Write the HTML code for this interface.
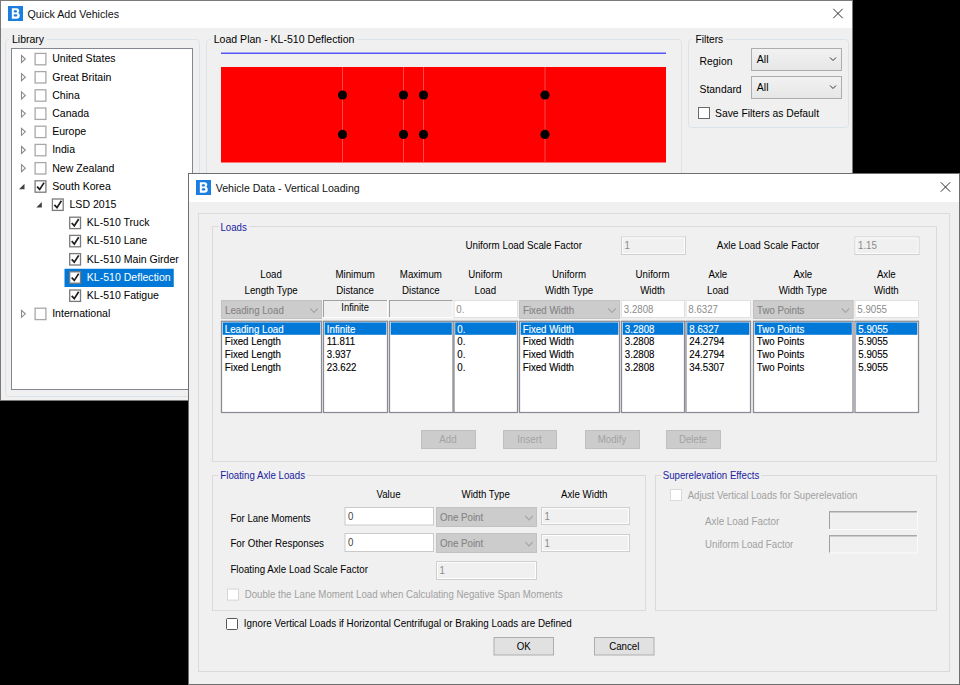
<!DOCTYPE html>
<html><head><meta charset="utf-8"><title>Quick Add Vehicles</title>
<style>
html,body{margin:0;padding:0;background:#000;width:960px;height:685px;overflow:hidden}
svg{display:block;font-family:"Liberation Sans",sans-serif}
</style></head><body>
<svg width="960" height="685" viewBox="0 0 960 685">
<defs><linearGradient id="cg" x1="0" y1="0" x2="0" y2="1"><stop offset="0" stop-color="#f2f2f2"/><stop offset="1" stop-color="#e6e6e6"/></linearGradient></defs>
<rect x="0" y="0" width="960" height="685" fill="#000"/>
<rect x="0.5" y="0.5" width="852" height="400" fill="#f0f0f0" stroke="#7a7a7a" stroke-width="1"/>
<rect x="1" y="1" width="851" height="27" fill="#fff"/>
<rect x="8" y="6" width="15" height="15" fill="#1a7de0"/>
<path d="M11.85 8.25 h4.7 q2.7 0 2.7 2.55 q0 1.5 -1.1 2.05 q1.6 0.6 1.6 2.6 q0 3.25 -3.25 3.25 h-4.65 z" fill="#fff"/>
<rect x="13.65" y="10.35" width="3.35" height="2.2" rx="1.1" fill="#1a7de0"/>
<rect x="13.65" y="14.35" width="3.7" height="2.1" rx="1.05" fill="#1a7de0"/>
<text x="27.50" y="18.20" font-size="11.3" fill="#111" textLength="91.50" lengthAdjust="spacingAndGlyphs">Quick Add Vehicles</text>
<path d="M833.3 8.8 L842.7 18.2 M842.7 8.8 L833.3 18.2" stroke="#2a2a2a" stroke-width="1.0" fill="none"/>
<rect x="5.5" y="39.5" width="194" height="357" fill="none" stroke="#dce3e8" stroke-width="1" rx="3"/>
<rect x="9" y="37" width="38" height="5" fill="#f0f0f0"/>
<text x="12.00" y="43.00" font-size="11.5" fill="#000" textLength="32.00" lengthAdjust="spacingAndGlyphs">Library</text>
<rect x="11.5" y="48.5" width="181" height="341" fill="#fff" stroke="#828790" stroke-width="1"/>
<path d="M21.5 55.5 L25.3 59.0 L21.5 62.5 Z" fill="none" stroke="#8a8a8a" stroke-width="1.1"/>
<rect x="35.1" y="53.4" width="10.8" height="11.4" fill="#fff" stroke="#a8a8a8" stroke-width="1.3"/>
<text x="52.20" y="62.30" font-size="11.5" fill="#000" textLength="63.34" lengthAdjust="spacingAndGlyphs">United States</text>
<path d="M21.5 73.7 L25.3 77.2 L21.5 80.7 Z" fill="none" stroke="#8a8a8a" stroke-width="1.1"/>
<rect x="35.1" y="71.6" width="10.8" height="11.4" fill="#fff" stroke="#a8a8a8" stroke-width="1.3"/>
<text x="52.20" y="80.50" font-size="11.5" fill="#000" textLength="59.22" lengthAdjust="spacingAndGlyphs">Great Britain</text>
<path d="M21.5 91.89999999999999 L25.3 95.39999999999999 L21.5 98.89999999999999 Z" fill="none" stroke="#8a8a8a" stroke-width="1.1"/>
<rect x="35.1" y="89.79999999999998" width="10.8" height="11.4" fill="#fff" stroke="#a8a8a8" stroke-width="1.3"/>
<text x="52.20" y="98.70" font-size="11.5" fill="#000" textLength="27.57" lengthAdjust="spacingAndGlyphs">China</text>
<path d="M21.5 110.1 L25.3 113.6 L21.5 117.1 Z" fill="none" stroke="#8a8a8a" stroke-width="1.1"/>
<rect x="35.1" y="107.99999999999999" width="10.8" height="11.4" fill="#fff" stroke="#a8a8a8" stroke-width="1.3"/>
<text x="52.20" y="116.90" font-size="11.5" fill="#000" textLength="36.96" lengthAdjust="spacingAndGlyphs">Canada</text>
<path d="M21.5 128.29999999999998 L25.3 131.79999999999998 L21.5 135.29999999999998 Z" fill="none" stroke="#8a8a8a" stroke-width="1.1"/>
<rect x="35.1" y="126.19999999999999" width="10.8" height="11.4" fill="#fff" stroke="#a8a8a8" stroke-width="1.3"/>
<text x="52.20" y="135.10" font-size="11.5" fill="#000" textLength="34.02" lengthAdjust="spacingAndGlyphs">Europe</text>
<path d="M21.5 146.5 L25.3 150.0 L21.5 153.5 Z" fill="none" stroke="#8a8a8a" stroke-width="1.1"/>
<rect x="35.1" y="144.4" width="10.8" height="11.4" fill="#fff" stroke="#a8a8a8" stroke-width="1.3"/>
<text x="52.20" y="153.30" font-size="11.5" fill="#000" textLength="22.88" lengthAdjust="spacingAndGlyphs">India</text>
<path d="M21.5 164.7 L25.3 168.2 L21.5 171.7 Z" fill="none" stroke="#8a8a8a" stroke-width="1.1"/>
<rect x="35.1" y="162.6" width="10.8" height="11.4" fill="#fff" stroke="#a8a8a8" stroke-width="1.3"/>
<text x="52.20" y="171.50" font-size="11.5" fill="#000" textLength="62.16" lengthAdjust="spacingAndGlyphs">New Zealand</text>
<path d="M19.0 189.2 L24.5 189.2 L24.5 183.7 Z" fill="#404040"/>
<rect x="35.1" y="180.79999999999998" width="10.8" height="11.4" fill="#fff" stroke="#7a7a7a" stroke-width="1.3"/>
<path d="M37.1 186.6 L39.7 189.39999999999998 L44.1 182.6" fill="none" stroke="#1e1e1e" stroke-width="1.7"/>
<text x="52.20" y="189.70" font-size="11.5" fill="#000" textLength="58.65" lengthAdjust="spacingAndGlyphs">South Korea</text>
<path d="M36.3 207.39999999999998 L41.8 207.39999999999998 L41.8 201.89999999999998 Z" fill="#404040"/>
<rect x="52.400000000000006" y="198.99999999999997" width="10.8" height="11.4" fill="#fff" stroke="#7a7a7a" stroke-width="1.3"/>
<path d="M54.400000000000006 204.79999999999998 L57.00000000000001 207.59999999999997 L61.400000000000006 200.79999999999998" fill="none" stroke="#1e1e1e" stroke-width="1.7"/>
<text x="69.50" y="207.90" font-size="11.5" fill="#000" textLength="46.92" lengthAdjust="spacingAndGlyphs">LSD 2015</text>
<rect x="69.7" y="217.19999999999996" width="10.8" height="11.4" fill="#fff" stroke="#7a7a7a" stroke-width="1.3"/>
<path d="M71.7 222.99999999999997 L74.3 225.79999999999995 L78.7 218.99999999999997" fill="none" stroke="#1e1e1e" stroke-width="1.7"/>
<text x="86.80" y="226.10" font-size="11.5" fill="#000" textLength="62.74" lengthAdjust="spacingAndGlyphs">KL-510 Truck</text>
<rect x="69.7" y="235.4" width="10.8" height="11.4" fill="#fff" stroke="#7a7a7a" stroke-width="1.3"/>
<path d="M71.7 241.20000000000002 L74.3 244.0 L78.7 237.20000000000002" fill="none" stroke="#1e1e1e" stroke-width="1.7"/>
<text x="86.80" y="244.30" font-size="11.5" fill="#000" textLength="60.42" lengthAdjust="spacingAndGlyphs">KL-510 Lane</text>
<rect x="69.7" y="253.6" width="10.8" height="11.4" fill="#fff" stroke="#7a7a7a" stroke-width="1.3"/>
<path d="M71.7 259.4 L74.3 262.2 L78.7 255.4" fill="none" stroke="#1e1e1e" stroke-width="1.7"/>
<text x="86.80" y="262.50" font-size="11.5" fill="#000" textLength="92.06" lengthAdjust="spacingAndGlyphs">KL-510 Main Girder</text>
<rect x="64.5" y="268.75" width="109.25" height="18.25" fill="#0078d7"/>
<rect x="69.7" y="271.8" width="10.8" height="11.4" fill="#fff" stroke="#7a7a7a" stroke-width="1.3"/>
<path d="M71.7 277.6 L74.3 280.40000000000003 L78.7 273.6" fill="none" stroke="#1e1e1e" stroke-width="1.7"/>
<text x="86.80" y="280.70" font-size="11.5" fill="#fff" textLength="83.86" lengthAdjust="spacingAndGlyphs">KL-510 Deflection</text>
<rect x="69.7" y="290.0" width="10.8" height="11.4" fill="#fff" stroke="#7a7a7a" stroke-width="1.3"/>
<path d="M71.7 295.8 L74.3 298.6 L78.7 291.8" fill="none" stroke="#1e1e1e" stroke-width="1.7"/>
<text x="86.80" y="298.90" font-size="11.5" fill="#000" textLength="72.14" lengthAdjust="spacingAndGlyphs">KL-510 Fatigue</text>
<path d="M21.5 310.29999999999995 L25.3 313.79999999999995 L21.5 317.29999999999995 Z" fill="none" stroke="#8a8a8a" stroke-width="1.1"/>
<rect x="35.1" y="308.2" width="10.8" height="11.4" fill="#fff" stroke="#a8a8a8" stroke-width="1.3"/>
<text x="52.20" y="317.10" font-size="11.5" fill="#000" textLength="58.07" lengthAdjust="spacingAndGlyphs">International</text>
<rect x="206.5" y="39.5" width="475" height="357" fill="none" stroke="#dce3e8" stroke-width="1" rx="3"/>
<rect x="210.7" y="37" width="146.75678125000002" height="5" fill="#f0f0f0"/>
<text x="213.70" y="43.00" font-size="11.5" fill="#000" textLength="140.76" lengthAdjust="spacingAndGlyphs">Load Plan - KL-510 Deflection</text>
<rect x="221" y="52.5" width="445" height="1.5" fill="#5555f8"/>
<rect x="221" y="67" width="445" height="95.5" fill="#ff0000"/>
<rect x="342.0" y="67" width="1" height="95.5" fill="#ff4a4a"/>
<circle cx="342.5" cy="95" r="4.6" fill="#000"/>
<circle cx="342.5" cy="134.4" r="4.6" fill="#000"/>
<rect x="403.0" y="67" width="1" height="95.5" fill="#ff4a4a"/>
<circle cx="403.5" cy="95" r="4.6" fill="#000"/>
<circle cx="403.5" cy="134.4" r="4.6" fill="#000"/>
<rect x="423.0" y="67" width="1" height="95.5" fill="#ff4a4a"/>
<circle cx="423.5" cy="95" r="4.6" fill="#000"/>
<circle cx="423.5" cy="134.4" r="4.6" fill="#000"/>
<rect x="544.5" y="67" width="1" height="95.5" fill="#ff4a4a"/>
<circle cx="545" cy="95" r="4.6" fill="#000"/>
<circle cx="545" cy="134.4" r="4.6" fill="#000"/>
<rect x="688.5" y="39.5" width="160" height="88" fill="none" stroke="#dce3e8" stroke-width="1" rx="3"/>
<rect x="692.5" y="37" width="33.7" height="5" fill="#f0f0f0"/>
<text x="695.50" y="42.70" font-size="11.5" fill="#000" textLength="27.70" lengthAdjust="spacingAndGlyphs">Filters</text>
<text x="699.60" y="64.60" font-size="11.5" fill="#000" textLength="32.80" lengthAdjust="spacingAndGlyphs">Region</text>
<text x="699.60" y="92.80" font-size="11.5" fill="#000" textLength="42.00" lengthAdjust="spacingAndGlyphs">Standard</text>
<rect x="751.5" y="48.5" width="90" height="22" fill="url(#cg)" stroke="#adadad"/>
<text x="756.80" y="63.00" font-size="11.5" fill="#000" textLength="11.72" lengthAdjust="spacingAndGlyphs">All</text>
<path d="M830 57.5 L833 60.5 L836 57.5" fill="none" stroke="#333" stroke-width="1"/>
<rect x="751.5" y="76.5" width="90" height="22" fill="url(#cg)" stroke="#adadad"/>
<text x="756.80" y="91.00" font-size="11.5" fill="#000" textLength="11.72" lengthAdjust="spacingAndGlyphs">All</text>
<path d="M830 85.5 L833 88.5 L836 85.5" fill="none" stroke="#333" stroke-width="1"/>
<rect x="698.5" y="107.5" width="11" height="11" fill="#fff" stroke="#6a6a6a" stroke-width="1"/>
<text x="715.00" y="117.20" font-size="11.5" fill="#000" textLength="104.00" lengthAdjust="spacingAndGlyphs">Save Filters as Default</text>
<rect x="188.5" y="173.5" width="771" height="511" fill="#f0f0f0" stroke="#6e6e6e" stroke-width="1"/>
<rect x="189" y="174" width="770" height="28" fill="#fff"/>
<rect x="196" y="180" width="15" height="15" fill="#1a7de0"/>
<path d="M199.85 182.25 h4.7 q2.7 0 2.7 2.55 q0 1.5 -1.1 2.05 q1.6 0.6 1.6 2.6 q0 3.25 -3.25 3.25 h-4.65 z" fill="#fff"/>
<rect x="201.65" y="184.35" width="3.35" height="2.2" rx="1.1" fill="#1a7de0"/>
<rect x="201.65" y="188.35" width="3.7" height="2.1" rx="1.05" fill="#1a7de0"/>
<text x="215.70" y="191.90" font-size="11.3" fill="#111" textLength="144.00" lengthAdjust="spacingAndGlyphs">Vehicle Data - Vertical Loading</text>
<path d="M940.8 182.3 L950.2 191.7 M950.2 182.3 L940.8 191.7" stroke="#2a2a2a" stroke-width="1.0" fill="none"/>
<rect x="198.5" y="213.5" width="751" height="458" fill="none" stroke="#dadada" stroke-width="1"/>
<rect x="212.5" y="226.5" width="724" height="235" fill="none" stroke="#dadada" stroke-width="1"/>
<rect x="218.5" y="223" width="30.3" height="6" fill="#f0f0f0"/>
<text x="220.50" y="231.00" font-size="10.5" fill="#20209e" textLength="26.30" lengthAdjust="spacingAndGlyphs">Loads</text>
<text x="465.40" y="249.00" font-size="10.5" fill="#000" textLength="116.60" lengthAdjust="spacingAndGlyphs">Uniform Load Scale Factor</text>
<rect x="621.5" y="237.0" width="64" height="17.5" fill="#f0f0f0" stroke="#cfcfcf" stroke-width="1"/>
<rect x="622.5" y="238.0" width="62" height="15.5" fill="none" stroke="#fdfdfd" stroke-width="1"/>
<text x="624.50" y="249.25" font-size="10.5" fill="#8a8a8a" textLength="5.39" lengthAdjust="spacingAndGlyphs">1</text>
<text x="716.80" y="249.00" font-size="10.5" fill="#000" textLength="102.40" lengthAdjust="spacingAndGlyphs">Axle Load Scale Factor</text>
<rect x="855.0" y="237.0" width="64.0" height="17.5" fill="#f0f0f0" stroke="#cfcfcf" stroke-width="1"/>
<rect x="856.0" y="238.0" width="62.0" height="15.5" fill="none" stroke="#fdfdfd" stroke-width="1"/>
<text x="858.00" y="249.25" font-size="10.5" fill="#8a8a8a" textLength="18.88" lengthAdjust="spacingAndGlyphs">1.15</text>
<text x="271.10" y="278.00" font-size="10.5" fill="#000" textLength="21.58" lengthAdjust="spacingAndGlyphs" text-anchor="middle">Load</text>
<text x="271.10" y="293.50" font-size="10.5" fill="#000" textLength="53.22" lengthAdjust="spacingAndGlyphs" text-anchor="middle">Length Type</text>
<rect x="221.0" y="300" width="101.0" height="19" fill="#cccccc"/>
<rect x="221.5" y="300.5" width="100.0" height="18" fill="none" stroke="#c2c2c2" stroke-width="1"/>
<text x="225.00" y="313.50" font-size="10.5" fill="#858585" textLength="58.80" lengthAdjust="spacingAndGlyphs" stroke="#858585" stroke-width="0.12">Leading Load</text>
<path d="M310.2 308.5 L314.0 312.5 L317.8 308.5" fill="none" stroke="#a6a6a6" stroke-width="1.1"/>
<rect x="221.5" y="321.3" width="100.0" height="91.2" fill="#fff" stroke="#888b93" stroke-width="1.25"/>
<rect x="222.7" y="322.4" width="97.6" height="12.4" fill="#0078d7"/>
<text x="224.80" y="332.50" font-size="10.5" fill="#fff" textLength="58.80" lengthAdjust="spacingAndGlyphs" stroke="#fff" stroke-width="0.12">Leading Load</text>
<text x="224.80" y="345.30" font-size="10.5" fill="#000" textLength="56.08" lengthAdjust="spacingAndGlyphs" stroke="#000" stroke-width="0.12">Fixed Length</text>
<text x="224.80" y="358.10" font-size="10.5" fill="#000" textLength="56.08" lengthAdjust="spacingAndGlyphs" stroke="#000" stroke-width="0.12">Fixed Length</text>
<text x="224.80" y="370.90" font-size="10.5" fill="#000" textLength="56.08" lengthAdjust="spacingAndGlyphs" stroke="#000" stroke-width="0.12">Fixed Length</text>
<text x="355.10" y="278.00" font-size="10.5" fill="#000" textLength="39.34" lengthAdjust="spacingAndGlyphs" text-anchor="middle">Minimum</text>
<text x="355.10" y="293.50" font-size="10.5" fill="#000" textLength="37.74" lengthAdjust="spacingAndGlyphs" text-anchor="middle">Distance</text>
<rect x="323.0" y="300" width="65.0" height="18" fill="#f0f0f0"/>
<line x1="323.5" y1="300" x2="323.5" y2="318" stroke="#a0a0a0" stroke-width="1"/>
<line x1="323.0" y1="300.5" x2="388.0" y2="300.5" stroke="#a0a0a0" stroke-width="1"/>
<line x1="387.5" y1="300" x2="387.5" y2="318" stroke="#fff" stroke-width="1"/>
<line x1="323.0" y1="317.5" x2="388.0" y2="317.5" stroke="#fff" stroke-width="1"/>
<text x="355.10" y="310.90" font-size="10.5" fill="#000" textLength="27.50" lengthAdjust="spacingAndGlyphs" text-anchor="middle">Infinite</text>
<rect x="323.5" y="321.3" width="64.0" height="91.2" fill="#fff" stroke="#888b93" stroke-width="1.25"/>
<rect x="324.7" y="322.4" width="61.6" height="12.4" fill="#0078d7"/>
<text x="326.80" y="332.50" font-size="10.5" fill="#fff" textLength="28.58" lengthAdjust="spacingAndGlyphs" stroke="#fff" stroke-width="0.12">Infinite</text>
<text x="326.80" y="345.30" font-size="10.5" fill="#000" textLength="28.23" lengthAdjust="spacingAndGlyphs" stroke="#000" stroke-width="0.12">11.811</text>
<text x="326.80" y="358.10" font-size="10.5" fill="#000" textLength="24.27" lengthAdjust="spacingAndGlyphs" stroke="#000" stroke-width="0.12">3.937</text>
<text x="326.80" y="370.90" font-size="10.5" fill="#000" textLength="29.67" lengthAdjust="spacingAndGlyphs" stroke="#000" stroke-width="0.12">23.622</text>
<text x="420.85" y="278.00" font-size="10.5" fill="#000" textLength="42.04" lengthAdjust="spacingAndGlyphs" text-anchor="middle">Maximum</text>
<text x="420.85" y="293.50" font-size="10.5" fill="#000" textLength="37.74" lengthAdjust="spacingAndGlyphs" text-anchor="middle">Distance</text>
<rect x="389.0" y="300" width="64.5" height="18" fill="#f0f0f0"/>
<line x1="389.5" y1="300" x2="389.5" y2="318" stroke="#a0a0a0" stroke-width="1"/>
<line x1="389.0" y1="300.5" x2="453.5" y2="300.5" stroke="#a0a0a0" stroke-width="1"/>
<line x1="453.0" y1="300" x2="453.0" y2="318" stroke="#fff" stroke-width="1"/>
<line x1="389.0" y1="317.5" x2="453.5" y2="317.5" stroke="#fff" stroke-width="1"/>
<rect x="389.5" y="321.3" width="63.5" height="91.2" fill="#fff" stroke="#888b93" stroke-width="1.25"/>
<rect x="390.7" y="322.4" width="61.1" height="12.4" fill="#0078d7"/>
<text x="485.35" y="278.00" font-size="10.5" fill="#000" textLength="33.96" lengthAdjust="spacingAndGlyphs" text-anchor="middle">Uniform</text>
<text x="485.35" y="293.50" font-size="10.5" fill="#000" textLength="21.58" lengthAdjust="spacingAndGlyphs" text-anchor="middle">Load</text>
<rect x="453.5" y="300" width="64.5" height="18" fill="#fff"/>
<rect x="454.0" y="300.5" width="63.5" height="17" fill="none" stroke="#e0e0e0" stroke-width="1"/>
<text x="456.30" y="312.50" font-size="10.5" fill="#8c8c8c" textLength="8.09" lengthAdjust="spacingAndGlyphs">0.</text>
<rect x="454.0" y="321.3" width="63.5" height="91.2" fill="#fff" stroke="#888b93" stroke-width="1.25"/>
<rect x="455.2" y="322.4" width="61.1" height="12.4" fill="#0078d7"/>
<text x="457.30" y="332.50" font-size="10.5" fill="#fff" textLength="8.09" lengthAdjust="spacingAndGlyphs" stroke="#fff" stroke-width="0.12">0.</text>
<text x="457.30" y="345.30" font-size="10.5" fill="#000" textLength="8.09" lengthAdjust="spacingAndGlyphs" stroke="#000" stroke-width="0.12">0.</text>
<text x="457.30" y="358.10" font-size="10.5" fill="#000" textLength="8.09" lengthAdjust="spacingAndGlyphs" stroke="#000" stroke-width="0.12">0.</text>
<text x="457.30" y="370.90" font-size="10.5" fill="#000" textLength="8.09" lengthAdjust="spacingAndGlyphs" stroke="#000" stroke-width="0.12">0.</text>
<text x="569.10" y="278.00" font-size="10.5" fill="#000" textLength="33.96" lengthAdjust="spacingAndGlyphs" text-anchor="middle">Uniform</text>
<text x="569.10" y="293.50" font-size="10.5" fill="#000" textLength="48.34" lengthAdjust="spacingAndGlyphs" text-anchor="middle">Width Type</text>
<rect x="519.0" y="300" width="101.0" height="19" fill="#cccccc"/>
<rect x="519.5" y="300.5" width="100.0" height="18" fill="none" stroke="#c2c2c2" stroke-width="1"/>
<text x="523.00" y="313.50" font-size="10.5" fill="#858585" textLength="51.21" lengthAdjust="spacingAndGlyphs" stroke="#858585" stroke-width="0.12">Fixed Width</text>
<path d="M608.2 308.5 L612.0 312.5 L615.8 308.5" fill="none" stroke="#a6a6a6" stroke-width="1.1"/>
<rect x="519.5" y="321.3" width="100.0" height="91.2" fill="#fff" stroke="#888b93" stroke-width="1.25"/>
<rect x="520.7" y="322.4" width="97.6" height="12.4" fill="#0078d7"/>
<text x="522.80" y="332.50" font-size="10.5" fill="#fff" textLength="51.21" lengthAdjust="spacingAndGlyphs" stroke="#fff" stroke-width="0.12">Fixed Width</text>
<text x="522.80" y="345.30" font-size="10.5" fill="#000" textLength="51.21" lengthAdjust="spacingAndGlyphs" stroke="#000" stroke-width="0.12">Fixed Width</text>
<text x="522.80" y="358.10" font-size="10.5" fill="#000" textLength="51.21" lengthAdjust="spacingAndGlyphs" stroke="#000" stroke-width="0.12">Fixed Width</text>
<text x="522.80" y="370.90" font-size="10.5" fill="#000" textLength="51.21" lengthAdjust="spacingAndGlyphs" stroke="#000" stroke-width="0.12">Fixed Width</text>
<text x="652.60" y="278.00" font-size="10.5" fill="#000" textLength="33.96" lengthAdjust="spacingAndGlyphs" text-anchor="middle">Uniform</text>
<text x="652.60" y="293.50" font-size="10.5" fill="#000" textLength="24.79" lengthAdjust="spacingAndGlyphs" text-anchor="middle">Width</text>
<rect x="621.0" y="300" width="64.0" height="18" fill="#fff"/>
<rect x="621.5" y="300.5" width="63.0" height="17" fill="none" stroke="#e0e0e0" stroke-width="1"/>
<text x="623.80" y="312.50" font-size="10.5" fill="#8c8c8c" textLength="29.67" lengthAdjust="spacingAndGlyphs">3.2808</text>
<rect x="621.5" y="321.3" width="63.0" height="91.2" fill="#fff" stroke="#888b93" stroke-width="1.25"/>
<rect x="622.7" y="322.4" width="60.6" height="12.4" fill="#0078d7"/>
<text x="624.80" y="332.50" font-size="10.5" fill="#fff" textLength="29.67" lengthAdjust="spacingAndGlyphs" stroke="#fff" stroke-width="0.12">3.2808</text>
<text x="624.80" y="345.30" font-size="10.5" fill="#000" textLength="29.67" lengthAdjust="spacingAndGlyphs" stroke="#000" stroke-width="0.12">3.2808</text>
<text x="624.80" y="358.10" font-size="10.5" fill="#000" textLength="29.67" lengthAdjust="spacingAndGlyphs" stroke="#000" stroke-width="0.12">3.2808</text>
<text x="624.80" y="370.90" font-size="10.5" fill="#000" textLength="29.67" lengthAdjust="spacingAndGlyphs" stroke="#000" stroke-width="0.12">3.2808</text>
<text x="717.85" y="278.00" font-size="10.5" fill="#000" textLength="18.87" lengthAdjust="spacingAndGlyphs" text-anchor="middle">Axle</text>
<text x="717.85" y="293.50" font-size="10.5" fill="#000" textLength="21.58" lengthAdjust="spacingAndGlyphs" text-anchor="middle">Load</text>
<rect x="685.5" y="300" width="65.5" height="18" fill="#fff"/>
<rect x="686.0" y="300.5" width="64.5" height="17" fill="none" stroke="#e0e0e0" stroke-width="1"/>
<text x="688.30" y="312.50" font-size="10.5" fill="#8c8c8c" textLength="29.67" lengthAdjust="spacingAndGlyphs">8.6327</text>
<rect x="686.0" y="321.3" width="64.5" height="91.2" fill="#fff" stroke="#888b93" stroke-width="1.25"/>
<rect x="687.2" y="322.4" width="62.1" height="12.4" fill="#0078d7"/>
<text x="689.30" y="332.50" font-size="10.5" fill="#fff" textLength="29.67" lengthAdjust="spacingAndGlyphs" stroke="#fff" stroke-width="0.12">8.6327</text>
<text x="689.30" y="345.30" font-size="10.5" fill="#000" textLength="35.06" lengthAdjust="spacingAndGlyphs" stroke="#000" stroke-width="0.12">24.2794</text>
<text x="689.30" y="358.10" font-size="10.5" fill="#000" textLength="35.06" lengthAdjust="spacingAndGlyphs" stroke="#000" stroke-width="0.12">24.2794</text>
<text x="689.30" y="370.90" font-size="10.5" fill="#000" textLength="35.06" lengthAdjust="spacingAndGlyphs" stroke="#000" stroke-width="0.12">34.5307</text>
<text x="802.85" y="278.00" font-size="10.5" fill="#000" textLength="18.87" lengthAdjust="spacingAndGlyphs" text-anchor="middle">Axle</text>
<text x="802.85" y="293.50" font-size="10.5" fill="#000" textLength="48.34" lengthAdjust="spacingAndGlyphs" text-anchor="middle">Width Type</text>
<rect x="753.0" y="300" width="100.5" height="19" fill="#cccccc"/>
<rect x="753.5" y="300.5" width="99.5" height="18" fill="none" stroke="#c2c2c2" stroke-width="1"/>
<text x="757.00" y="313.50" font-size="10.5" fill="#858585" textLength="47.44" lengthAdjust="spacingAndGlyphs" stroke="#858585" stroke-width="0.12">Two Points</text>
<path d="M841.7 308.5 L845.5 312.5 L849.3 308.5" fill="none" stroke="#a6a6a6" stroke-width="1.1"/>
<rect x="753.5" y="321.3" width="99.5" height="91.2" fill="#fff" stroke="#888b93" stroke-width="1.25"/>
<rect x="754.7" y="322.4" width="97.1" height="12.4" fill="#0078d7"/>
<text x="756.80" y="332.50" font-size="10.5" fill="#fff" textLength="47.44" lengthAdjust="spacingAndGlyphs" stroke="#fff" stroke-width="0.12">Two Points</text>
<text x="756.80" y="345.30" font-size="10.5" fill="#000" textLength="47.44" lengthAdjust="spacingAndGlyphs" stroke="#000" stroke-width="0.12">Two Points</text>
<text x="756.80" y="358.10" font-size="10.5" fill="#000" textLength="47.44" lengthAdjust="spacingAndGlyphs" stroke="#000" stroke-width="0.12">Two Points</text>
<text x="756.80" y="370.90" font-size="10.5" fill="#000" textLength="47.44" lengthAdjust="spacingAndGlyphs" stroke="#000" stroke-width="0.12">Two Points</text>
<text x="886.35" y="278.00" font-size="10.5" fill="#000" textLength="18.87" lengthAdjust="spacingAndGlyphs" text-anchor="middle">Axle</text>
<text x="886.35" y="293.50" font-size="10.5" fill="#000" textLength="24.79" lengthAdjust="spacingAndGlyphs" text-anchor="middle">Width</text>
<rect x="854.5" y="300" width="64.5" height="18" fill="#fff"/>
<rect x="855.0" y="300.5" width="63.5" height="17" fill="none" stroke="#e0e0e0" stroke-width="1"/>
<text x="857.30" y="312.50" font-size="10.5" fill="#8c8c8c" textLength="29.67" lengthAdjust="spacingAndGlyphs">5.9055</text>
<rect x="855.0" y="321.3" width="63.5" height="91.2" fill="#fff" stroke="#888b93" stroke-width="1.25"/>
<rect x="856.2" y="322.4" width="61.1" height="12.4" fill="#0078d7"/>
<text x="858.30" y="332.50" font-size="10.5" fill="#fff" textLength="29.67" lengthAdjust="spacingAndGlyphs" stroke="#fff" stroke-width="0.12">5.9055</text>
<text x="858.30" y="345.30" font-size="10.5" fill="#000" textLength="29.67" lengthAdjust="spacingAndGlyphs" stroke="#000" stroke-width="0.12">5.9055</text>
<text x="858.30" y="358.10" font-size="10.5" fill="#000" textLength="29.67" lengthAdjust="spacingAndGlyphs" stroke="#000" stroke-width="0.12">5.9055</text>
<text x="858.30" y="370.90" font-size="10.5" fill="#000" textLength="29.67" lengthAdjust="spacingAndGlyphs" stroke="#000" stroke-width="0.12">5.9055</text>
<rect x="421.5" y="430.5" width="54" height="18" fill="#cccccc" stroke="#bfbfbf" stroke-width="1"/>
<text x="448.00" y="443.00" font-size="10.5" fill="#a3a3a3" textLength="17.26" lengthAdjust="spacingAndGlyphs" text-anchor="middle">Add</text>
<rect x="503.5" y="430.5" width="53" height="18" fill="#cccccc" stroke="#bfbfbf" stroke-width="1"/>
<text x="529.50" y="443.00" font-size="10.5" fill="#a3a3a3" textLength="24.26" lengthAdjust="spacingAndGlyphs" text-anchor="middle">Insert</text>
<rect x="585.5" y="430.5" width="54" height="18" fill="#cccccc" stroke="#bfbfbf" stroke-width="1"/>
<text x="612.00" y="443.00" font-size="10.5" fill="#a3a3a3" textLength="28.57" lengthAdjust="spacingAndGlyphs" text-anchor="middle">Modify</text>
<rect x="666.5" y="430.5" width="54" height="18" fill="#cccccc" stroke="#bfbfbf" stroke-width="1"/>
<text x="693.00" y="443.00" font-size="10.5" fill="#a3a3a3" textLength="28.04" lengthAdjust="spacingAndGlyphs" text-anchor="middle">Delete</text>
<rect x="212.5" y="475.5" width="433" height="135" fill="none" stroke="#dadada" stroke-width="1"/>
<rect x="218.3" y="472" width="88.7" height="6" fill="#f0f0f0"/>
<text x="220.30" y="479.00" font-size="10.5" fill="#20209e" textLength="84.70" lengthAdjust="spacingAndGlyphs">Floating Axle Loads</text>
<text x="388.50" y="498.00" font-size="10.5" fill="#000" textLength="24.09" lengthAdjust="spacingAndGlyphs" text-anchor="middle">Value</text>
<text x="485.70" y="498.00" font-size="10.5" fill="#000" textLength="48.34" lengthAdjust="spacingAndGlyphs" text-anchor="middle">Width Type</text>
<text x="584.20" y="498.00" font-size="10.5" fill="#000" textLength="46.36" lengthAdjust="spacingAndGlyphs" text-anchor="middle">Axle Width</text>
<text x="230.40" y="522.30" font-size="10.5" fill="#000" textLength="80.20" lengthAdjust="spacingAndGlyphs">For Lane Moments</text>
<text x="230.40" y="547.00" font-size="10.5" fill="#000" textLength="93.60" lengthAdjust="spacingAndGlyphs">For Other Responses</text>
<text x="230.40" y="573.20" font-size="10.5" fill="#000" textLength="137.60" lengthAdjust="spacingAndGlyphs">Floating Axle Load Scale Factor</text>
<rect x="345.0" y="507.5" width="88.5" height="17.5" fill="#fff" stroke="#cacaca" stroke-width="1"/>
<text x="348.00" y="519.75" font-size="10.5" fill="#444" textLength="5.39" lengthAdjust="spacingAndGlyphs">0</text>
<rect x="345.0" y="533.5" width="88.5" height="18" fill="#fff" stroke="#cacaca" stroke-width="1"/>
<text x="348.00" y="546.00" font-size="10.5" fill="#444" textLength="5.39" lengthAdjust="spacingAndGlyphs">0</text>
<rect x="436" y="507" width="101" height="20" fill="#cccccc"/>
<rect x="436.5" y="507.5" width="100" height="19" fill="none" stroke="#c2c2c2" stroke-width="1"/>
<text x="440.00" y="521.00" font-size="10.5" fill="#858585" textLength="43.14" lengthAdjust="spacingAndGlyphs" stroke="#858585" stroke-width="0.12">One Point</text>
<path d="M525.2 516.0 L529 520.0 L532.8 516.0" fill="none" stroke="#a6a6a6" stroke-width="1.1"/>
<rect x="436" y="533" width="101" height="20" fill="#cccccc"/>
<rect x="436.5" y="533.5" width="100" height="19" fill="none" stroke="#c2c2c2" stroke-width="1"/>
<text x="440.00" y="547.00" font-size="10.5" fill="#858585" textLength="43.14" lengthAdjust="spacingAndGlyphs" stroke="#858585" stroke-width="0.12">One Point</text>
<path d="M525.2 542.0 L529 546.0 L532.8 542.0" fill="none" stroke="#a6a6a6" stroke-width="1.1"/>
<rect x="541.5" y="507.5" width="88" height="17" fill="#f0f0f0" stroke="#cfcfcf" stroke-width="1"/>
<rect x="542.5" y="508.5" width="86" height="15" fill="none" stroke="#fdfdfd" stroke-width="1"/>
<text x="544.50" y="519.50" font-size="10.5" fill="#8a8a8a" textLength="5.39" lengthAdjust="spacingAndGlyphs">1</text>
<rect x="541.5" y="534.5" width="88" height="17" fill="#f0f0f0" stroke="#cfcfcf" stroke-width="1"/>
<rect x="542.5" y="535.5" width="86" height="15" fill="none" stroke="#fdfdfd" stroke-width="1"/>
<text x="544.50" y="546.50" font-size="10.5" fill="#8a8a8a" textLength="5.39" lengthAdjust="spacingAndGlyphs">1</text>
<rect x="436.5" y="561.5" width="100" height="18" fill="#f0f0f0" stroke="#cfcfcf" stroke-width="1"/>
<rect x="437.5" y="562.5" width="98" height="16" fill="none" stroke="#fdfdfd" stroke-width="1"/>
<text x="439.50" y="574.00" font-size="10.5" fill="#8a8a8a" textLength="5.39" lengthAdjust="spacingAndGlyphs">1</text>
<rect x="227.5" y="589.1" width="11" height="11" fill="#fff" stroke="#d6d6d6" stroke-width="1"/>
<text x="244.70" y="598.00" font-size="10.5" fill="#a0a0a0" textLength="317.80" lengthAdjust="spacingAndGlyphs">Double the Lane Moment Load when Calculating Negative Span Moments</text>
<rect x="655.5" y="475.5" width="281" height="135" fill="none" stroke="#dadada" stroke-width="1"/>
<rect x="660.7" y="472" width="100.6" height="6" fill="#f0f0f0"/>
<text x="662.70" y="478.60" font-size="10.5" fill="#20209e" textLength="96.60" lengthAdjust="spacingAndGlyphs">Superelevation Effects</text>
<rect x="670.5" y="489.5" width="11" height="11" fill="#fff" stroke="#dadada" stroke-width="1"/>
<text x="687.70" y="498.60" font-size="10.5" fill="#a0a0a0" textLength="169.60" lengthAdjust="spacingAndGlyphs">Adjust Vertical Loads for Superelevation</text>
<text x="705.00" y="525.00" font-size="10.5" fill="#a0a0a0" textLength="74.30" lengthAdjust="spacingAndGlyphs">Axle Load Factor</text>
<text x="705.00" y="548.30" font-size="10.5" fill="#a0a0a0" textLength="88.30" lengthAdjust="spacingAndGlyphs">Uniform Load Factor</text>
<rect x="829" y="511" width="89" height="19" fill="#f0f0f0"/>
<line x1="829.5" y1="511" x2="829.5" y2="530" stroke="#a0a0a0" stroke-width="1"/>
<line x1="829" y1="511.7" x2="918" y2="511.7" stroke="#a8a8a8" stroke-width="1.4"/>
<line x1="917.5" y1="511" x2="917.5" y2="530" stroke="#fafafa" stroke-width="1"/>
<line x1="829" y1="529.5" x2="918" y2="529.5" stroke="#fafafa" stroke-width="1"/>
<rect x="829" y="535" width="89" height="18.5" fill="#f0f0f0"/>
<line x1="829.5" y1="535" x2="829.5" y2="553.5" stroke="#a0a0a0" stroke-width="1"/>
<line x1="829" y1="535.7" x2="918" y2="535.7" stroke="#a8a8a8" stroke-width="1.4"/>
<line x1="917.5" y1="535" x2="917.5" y2="553.5" stroke="#fafafa" stroke-width="1"/>
<line x1="829" y1="553.0" x2="918" y2="553.0" stroke="#fafafa" stroke-width="1"/>
<rect x="226.5" y="618.5" width="11" height="11" fill="#fff" stroke="#555" stroke-width="1" rx="1"/>
<text x="243.80" y="627.00" font-size="10.5" fill="#000" textLength="328.00" lengthAdjust="spacingAndGlyphs">Ignore Vertical Loads if Horizontal Centrifugal or Braking Loads are Defined</text>
<rect x="494.0" y="637.5" width="59.5" height="17.5" fill="#e1e1e1" stroke="#adadad" stroke-width="1"/>
<text x="523.75" y="650.25" font-size="10.5" fill="#000" textLength="14.01" lengthAdjust="spacingAndGlyphs" text-anchor="middle">OK</text>
<rect x="594.5" y="637.5" width="59.5" height="17.5" fill="#e1e1e1" stroke="#adadad" stroke-width="1"/>
<text x="624.25" y="650.25" font-size="10.5" fill="#000" textLength="30.19" lengthAdjust="spacingAndGlyphs" text-anchor="middle">Cancel</text>
</svg></body></html>
